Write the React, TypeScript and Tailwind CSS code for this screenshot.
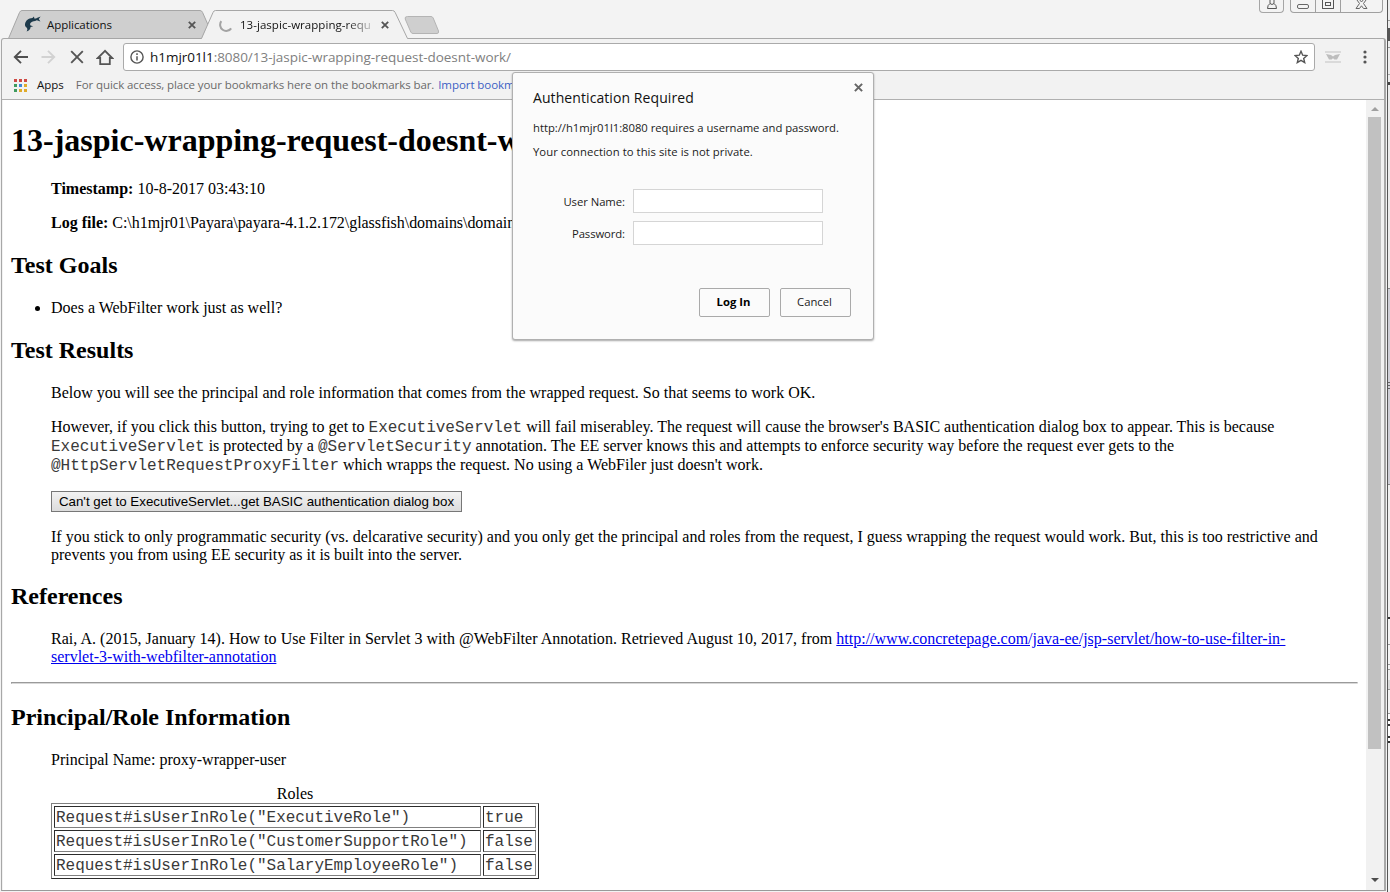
import type { ReactNode } from "react";

const UI = "font-['Open_Sans','Noto_Sans',sans-serif]";

function CloseX({ size, color, width }: { size: number; color: string; width: number }) {
  return (
    <svg width={size} height={size} viewBox="0 0 8 8" className="shrink-0">
      <path d="M0.8 0.8 L7.2 7.2 M7.2 0.8 L0.8 7.2" stroke={color} strokeWidth={width} fill="none" />
    </svg>
  );
}

function FishIcon() {
  return (
    <svg width="17" height="17" viewBox="0 0 17 17" className="shrink-0">
      <path
        d="M1 8.2 C1.6 4.6 4.6 2.2 8.4 2.1 L10 0.6 L10.3 2.4 C11.4 2.8 12.2 2.6 12.8 1.9 L16.6 0.6 L14.8 3 L16.4 5.4 L12.8 4.3 C10.6 5.6 8.4 5.2 7 6.4 C5.8 7.4 6 8.6 6.6 9.6 L9.2 10.2 L6.6 11 C6.4 13 5.2 14.6 2.6 15.6 C3.6 14 3.6 12.8 2.6 11.6 C1.4 10.6 0.8 9.6 1 8.2 Z"
        fill="#1d3a4b"
      />
    </svg>
  );
}

function TabStrip() {
  return (
    <div className="flex h-[28px] items-start pl-[8px]">
      <div className="relative flex h-[29px] w-[202px] shrink-0 items-center">
        <svg className="absolute inset-0" width="202" height="29" viewBox="0 0 202 29">
          <path d="M0.5 28.5 L11.5 2.5 Q12.4 0.5 14 0.5 H192 Q193.8 0.5 194.6 2.5 L201 17 L195 28.5 Z" fill="#cfcfcf" stroke="#a6a6a6" />
        </svg>
        <div className="relative flex w-full items-center pl-[16px]">
          <FishIcon />
          <span className="ml-[6px] w-[130px] text-[11.5px] leading-4 tracking-[-0.05px] text-[#111]">Applications</span>
          <span className="ml-[11px]"><CloseX size={8} color="#555" width={1.8} /></span>
        </div>
      </div>
      <div className="relative z-10 -ml-[9px] flex h-[29px] w-[208px] shrink-0 items-center">
        <svg className="absolute inset-0" width="208" height="29" viewBox="0 0 208 29">
          <path d="M0.5 29 L12 2.5 Q12.8 0.5 14.5 0.5 H191.5 Q193.3 0.5 194.2 2.5 L206.5 28.5 V29 Z" fill="#f2f2f2" />
          <path d="M0.5 28.5 L12 2.5 Q12.8 0.5 14.5 0.5 H191.5 Q193.3 0.5 194.2 2.5 L206.5 28.5" fill="none" stroke="#a6a6a6" />
        </svg>
        <div className="relative flex w-full items-center pl-[18px]">
          <svg width="14" height="14" viewBox="0 0 14 14" className="shrink-0">
            <path d="M2.3 3.2 A5.9 5.9 0 0 0 12.2 10.4" fill="none" stroke="#a3a3a3" strokeWidth="2" />
          </svg>
          <span className="ml-[7px] w-[132px] overflow-hidden bg-linear-to-r from-[#111] from-80% to-[#c8c8c8] bg-clip-text text-[11.5px] leading-4 tracking-[0.04px] whitespace-nowrap text-transparent">
            13-jaspic-wrapping-requ
          </span>
          <span className="ml-[9px]"><CloseX size={8} color="#555" width={1.8} /></span>
        </div>
      </div>
      <svg width="36" height="20" viewBox="0 0 36 20" className="-ml-[5px] mt-[6px] shrink-0">
        <path d="M3.5 0.5 H27 Q28.5 0.5 29.2 2 L34.5 15 Q35 17.5 33 17.5 H9 Q7.5 17.5 6.8 16 L1.2 3 Q0.5 0.5 3.5 0.5 Z" fill="#cfcfcf" stroke="#b4b4b4" />
      </svg>
    </div>
  );
}

function WindowControls() {
  return (
    <div className="absolute top-0 right-[4px] flex h-[13px] items-start gap-[6px]">
      <div className="flex h-[13px] w-[25px] justify-center rounded-b-[4px] border border-t-0 border-[#a5a5a5]">
        <svg width="12" height="10" viewBox="0 0 12 10">
          <path d="M4 0 V3.5 M8 0 V3.5 M4 3.5 Q1.5 5 1.5 8.5 H10.5 Q10.5 5 8 3.5 Q6 5.5 4 3.5" fill="none" stroke="#555" />
        </svg>
      </div>
      <div className="flex h-[13px] w-[93px] rounded-b-[4px] border border-t-0 border-[#a0a0a0]">
        <div className="flex w-[25px] justify-center border-r border-[#a0a0a0] pt-[4px]">
          <div className="h-[5px] w-[12px] rounded-[2px] border border-[#666]" />
        </div>
        <div className="flex w-[25px] justify-center border-r border-[#a0a0a0]">
          <div className="flex h-[9px] w-[12px] justify-center rounded-b-[1px] border border-t-0 border-[#555] pt-[2px]">
            <div className="h-[4px] w-[6px] border border-[#555]" />
          </div>
        </div>
        <div className="flex flex-1 justify-center">
          <svg width="13" height="10" viewBox="0 0 13 10">
            <path d="M2 0 L4.5 3.5 L1 8.5 H4.5 L6.5 5.8 L8.5 8.5 H12 L8.5 3.5 L11 0 M4.8 0 L6.5 2 L8.2 0" fill="none" stroke="#666" />
          </svg>
        </div>
      </div>
    </div>
  );
}

function Toolbar() {
  return (
    <div className="flex h-[36px] items-center pl-[11px]">
      <svg width="16" height="14" viewBox="0 0 16 14" className="shrink-0">
        <path d="M15 7 H2 M8 0.8 L1.8 7 L8 13.2" fill="none" stroke="#4f4f4f" strokeWidth="1.9" />
      </svg>
      <svg width="15" height="14" viewBox="0 0 15 14" className="ml-[12px] shrink-0">
        <path d="M0.5 7 H13 M7 0.8 L13.2 7 L7 13.2" fill="none" stroke="#d2d2d2" strokeWidth="1.9" />
      </svg>
      <svg width="14" height="14" viewBox="0 0 14 14" className="ml-[14px] shrink-0">
        <path d="M1.2 1.2 L12.8 12.8 M12.8 1.2 L1.2 12.8" stroke="#555" strokeWidth="1.9" />
      </svg>
      <svg width="18" height="17" viewBox="0 0 18 17" className="ml-[12px] shrink-0">
        <path d="M9 1.8 L1.8 9 H4.2 V15.2 H13.8 V9 H16.2 Z" fill="none" stroke="#555" strokeWidth="1.8" />
      </svg>
      <div className="ml-[9px] flex h-[28px] w-[1192px] shrink-0 items-center rounded-[3px] border border-[#aaa] bg-white pl-[6px]">
        <svg width="14" height="14" viewBox="0 0 14 14" className="shrink-0">
          <circle cx="7" cy="7" r="6.1" fill="none" stroke="#555" strokeWidth="1.4" />
          <path d="M7 6.2 V10.5 M7 3.3 V4.9" stroke="#555" strokeWidth="1.5" />
        </svg>
        <span className="ml-[6px] flex-1 text-[13.5px] leading-5 tracking-[-0.04px] text-[#808080]">
          <span className="text-[#111]">h1mjr01l1</span>:8080/13-jaspic-wrapping-request-doesnt-work/
        </span>
        <svg width="14" height="14" viewBox="0 0 14 14" className="mr-[6px] shrink-0">
          <path d="M7 1.3 L8.7 5.2 L12.9 5.6 L9.7 8.4 L10.7 12.6 L7 10.4 L3.3 12.6 L4.3 8.4 L1.1 5.6 L5.3 5.2 Z" fill="none" stroke="#555" strokeWidth="1.4" />
        </svg>
      </div>
      <svg width="16" height="12" viewBox="0 0 16 12" className="ml-[10px] shrink-0">
        <path d="M0 1 H16 M0 11 H16" stroke="#d2d2d2" strokeWidth="1.5" />
        <path d="M1 3 L6 4 L8 5.5 L10 4 L15 3 L12 8.5 H9.5 L8 7.2 L6.5 8.5 H4 Z" fill="#bdbdbd" />
      </svg>
      <svg width="4" height="14" viewBox="0 0 4 14" className="ml-[22px] shrink-0">
        <circle cx="2" cy="2" r="1.6" fill="#555" />
        <circle cx="2" cy="7" r="1.6" fill="#555" />
        <circle cx="2" cy="12" r="1.6" fill="#555" />
      </svg>
    </div>
  );
}

const APP_DOTS = [
  "bg-[#cf4a44]", "bg-[#cf4a44]", "bg-[#cf4a44]",
  "bg-[#3f9b5f]", "bg-[#3f86d8]", "bg-[#e0ab2a]",
  "bg-[#3f9b5f]", "bg-[#e0ab2a]", "bg-[#e0ab2a]",
];

function BookmarksBar() {
  return (
    <div className="flex h-[24px] items-center pb-[4px] pl-[12px] text-[11.5px] leading-4 whitespace-nowrap">
      <div className="grid grid-cols-3 gap-[2px]">
        {APP_DOTS.map((c, i) => (
          <span key={i} className={`h-[3px] w-[3px] ${c}`} />
        ))}
      </div>
      <span className="ml-[10px] text-[#111]">Apps</span>
      <span className="ml-[12px] tracking-[-0.09px] text-[#6a6a6a]">For quick access, place your bookmarks here on the bookmarks bar.</span>
      <span className="ml-[4px] tracking-[-0.07px] text-[#3c5fc4]">Import bookmarks now...</span>
    </div>
  );
}

function Code({ children }: { children: ReactNode }) {
  return <code className="font-['Liberation_Mono',monospace] text-[16px] leading-[0] text-[#3a3a3a]">{children}</code>;
}

function H2({ children, top = "mt-[20px]" }: { children: ReactNode; top?: string }) {
  return <h2 className={`mb-[20px] text-[24px] leading-[27px] font-bold ${top}`}>{children}</h2>;
}

const ROLES = [
  ['Request#isUserInRole("ExecutiveRole")', "true"],
  ['Request#isUserInRole("CustomerSupportRole")', "false"],
  ['Request#isUserInRole("SalaryEmployeeRole")', "false"],
];

const CELL =
  "h-[22px] border border-t-[#2c2c2c] border-l-[#2c2c2c] border-r-[#808080] border-b-[#808080] px-[1px] py-0 leading-[18px] tracking-[-0.03px] whitespace-nowrap";

function Page() {
  return (
    <main className="flow-root flex-1 overflow-hidden bg-white pr-[8px] pl-[8px] font-['Liberation_Serif',serif] text-[16px] leading-[18px] whitespace-nowrap text-black">
      <h1 className="mt-[22px] mb-[21px] text-[32px] leading-[37px] font-bold">13-jaspic-wrapping-request-doesnt-work</h1>
      <div className="mx-[40px] flex flex-col gap-[16px]">
        <p><b>Timestamp:</b> 10-8-2017 03:43:10</p>
        <p><b>Log file:</b> <span className="tracking-[-0.05px]">C:\h1mjr01\Payara\payara-4.1.2.172\glassfish\domains\domain1</span></p>
      </div>
      <H2>Test Goals</H2>
      <ul className="list-disc pl-[40px]">
        <li>Does a WebFilter work just as well?</li>
      </ul>
      <H2>Test Results</H2>
      <div className="mx-[40px]">
        <p>Below you will see the principal and role information that comes from the wrapped request. So that seems to work OK.</p>
        <p className="mt-[15px] leading-[19px]">
          However, if you click this button, trying to get to <Code>ExecutiveServlet</Code> will fail miserabley. The request will cause the browser's BASIC authentication dialog box to appear. This is because
          <br />
          <Code>ExecutiveServlet</Code> is protected by a <Code>@ServletSecurity</Code> annotation. The EE server knows this and attempts to enforce security way before the request ever gets to the
          <br />
          <Code>@HttpServletRequestProxyFilter</Code> which wrapps the request. No using a WebFiler just doesn't work.
        </p>
        <button className="mt-[17px] block h-[21px] w-[411px] border border-[#777] bg-linear-to-b from-[#f2f2f2] to-[#dcdcdc] font-['Liberation_Sans',sans-serif] text-[13.333px] leading-[18px]">
          Can't get to ExecutiveServlet...get BASIC authentication dialog box
        </button>
        <p className="mt-[16px]">
          If you stick to only programmatic security (vs. delcarative security) and you only get the principal and roles from the request, I guess wrapping the request would work. But, this is too restrictive and
          <br />
          prevents you from using EE security as it is built into the server.
        </p>
      </div>
      <H2 top="mt-[19px]">References</H2>
      <p className="mx-[40px]">
        <span className="tracking-[0.022px]">Rai, A. (2015, January 14). How to Use Filter in Servlet 3 with @WebFilter Annotation. Retrieved August 10, 2017, from </span>
        <a className="text-[#0000ee] underline">
          http://www.concretepage.com/java-ee/jsp-servlet/how-to-use-filter-in-
          <br />
          servlet-3-with-webfilter-annotation
        </a>
      </p>
      <hr className="mt-[16px] h-[2px] border border-t-[#9a9a9a] border-r-[#eee] border-b-[#d8d8d8] border-l-[#9a9a9a]" />
      <H2>Principal/Role Information</H2>
      <div className="mx-[40px]">
        <p>Principal Name: proxy-wrapper-user</p>
        <table className="mt-[16px] w-[488px] table-fixed border-separate border-spacing-[2px] border border-t-[#808080] border-r-[#2c2c2c] border-b-[#2c2c2c] border-l-[#808080]">
          <caption className="leading-[18px]">Roles</caption>
          <colgroup>
            <col className="w-[427px]" />
            <col className="w-[53px]" />
          </colgroup>
          <tbody>
            {ROLES.map(([call, value]) => (
              <tr key={call}>
                <td className={CELL}><Code>{call}</Code></td>
                <td className={CELL}><Code>{value}</Code></td>
              </tr>
            ))}
          </tbody>
        </table>
      </div>
    </main>
  );
}

function Scrollbar() {
  return (
    <div className="flex w-[18px] shrink-0 flex-col items-center bg-[#f1f1f1] pr-[1px]">
      <div className="flex h-[17px] items-center justify-center">
        <svg width="8" height="4" viewBox="0 0 8 4"><path d="M0 4 L4 0 L8 4 Z" fill="#a0a0a0" /></svg>
      </div>
      <div className="h-[632px] w-[13px] bg-[#c1c1c1]" />
      <div className="flex-1" />
      <div className="flex h-[20px] items-center justify-center">
        <svg width="8" height="4" viewBox="0 0 8 4"><path d="M0 0 H8 L4 4 Z" fill="#4d4d4d" /></svg>
      </div>
    </div>
  );
}

function Field({ label, spacing }: { label: string; spacing: string }) {
  return (
    <label className="flex h-[24px] items-center">
      <span className={`w-[92px] pt-[1px] text-right ${spacing}`}>{label}</span>
      <input className="ml-[8px] h-[24px] w-[190px] border border-[#d5d5d5] bg-white" />
    </label>
  );
}

function AuthDialog() {
  return (
    <div
      role="dialog"
      className={`absolute top-[72px] left-[512px] z-20 flex h-[268px] w-[362px] flex-col rounded-[3px] border border-[#b0b0b0] bg-[#fbfbfb] pr-[22px] pl-[20px] text-[11.3px] leading-4 text-[#1c1c1c] shadow-[0_1px_2px_rgba(0,0,0,0.35)] ${UI}`}
    >
      <span className="absolute top-[10px] right-[10px] flex"><CloseX size={9} color="#666" width={1.8} /></span>
      <h2 className="mt-[15px] text-[14px] leading-5 tracking-[0.08px] text-[#111]">Authentication Required</h2>
      <p className="mt-[12px] tracking-[-0.035px] whitespace-nowrap">http://h1mjr01l1:8080 requires a username and password.</p>
      <p className="mt-[8px] tracking-[0.045px] whitespace-nowrap">Your connection to this site is not private.</p>
      <div className="mt-[29px] flex flex-col gap-[8px]">
        <Field label="User Name:" spacing="tracking-[-0.05px]" />
        <Field label="Password:" spacing="tracking-[-0.1px]" />
      </div>
      <div className="mt-[43px] flex justify-end gap-[10px]">
        <button className="h-[29px] w-[71px] rounded-[2px] border border-[#aaa] bg-[#fbfbfb] pr-[2px] pb-[2px] font-bold text-black">Log In</button>
        <button className="h-[29px] w-[71px] rounded-[2px] border border-[#aaa] bg-[#fbfbfb] pr-[2px] pb-[2px]">Cancel</button>
      </div>
    </div>
  );
}

const EDGE: [number, string][] = [
  [20, "bg-[#ededed]"], [1, "bg-[#999]"], [7, "bg-[#ededed]"], [13, "bg-[#555]"], [6, "bg-[#ededed]"], [1, "bg-[#999]"],
  [26, "bg-[#ededed]"], [1, "bg-[#aaa]"], [7, "bg-[#ededed]"], [3, "bg-[#444]"], [203, "bg-[#ececec]"], [1, "bg-[#888]"],
  [93, "bg-[#d0d0d8]"], [1, "bg-[#666]"], [2, "bg-[#d0d0d8]"], [1, "bg-[#666]"], [2, "bg-[#d0d0d8]"], [1, "bg-[#666]"],
  [95, "bg-[#d0d0d8]"], [1, "bg-[#888]"], [132, "bg-[#efefef]"], [2, "bg-[#333]"], [25, "bg-[#f4f4f4]"], [1, "bg-[#999]"],
  [19, "bg-[#f4f4f4]"], [1, "bg-[#999]"], [4, "bg-[#f4f4f4]"], [1, "bg-[#999]"], [10, "bg-[#efefef]"], [9, "bg-[#dcdcdc]"],
  [1, "bg-[#999]"], [23, "bg-[#f4f4f4]"], [1, "bg-[#999]"], [5, "bg-[#fff]"], [2, "bg-[#333]"], [3, "bg-[#fff]"],
  [2, "bg-[#333]"], [10, "bg-[#fff]"], [2, "bg-[#333]"], [3, "bg-[#fff]"], [2, "bg-[#333]"],
];

function BackgroundWindowEdge() {
  return (
    <div className="flex w-[3px] flex-col border-l border-[#555] bg-[#f2f2f2]">
      {EDGE.map(([h, c], i) => (
        <div key={i} className={`shrink-0 ${c}`} style={{ height: h }} />
      ))}
    </div>
  );
}

export default function App() {
  return (
    <div className="flex h-[892px] w-[1390px] overflow-hidden bg-[#f3f3f3]">
      <div className={`relative flex w-[1387px] flex-col pt-[10px] ${UI}`}>
        <WindowControls />
        <TabStrip />
        <div className="mr-[1px] ml-[1px] flex h-[853px] flex-col rounded-t-[3px] border border-r-2 border-[#a8a8a8] border-b-[#9a9a9a] bg-[#f2f2f2]">
          <div className="flex h-[61px] shrink-0 flex-col border-b border-[#b0b0b0]">
            <Toolbar />
            <BookmarksBar />
          </div>
          <div className="flex min-h-0 flex-1 pl-[1px]">
            <Page />
            <Scrollbar />
          </div>
        </div>
        <AuthDialog />
      </div>
      <BackgroundWindowEdge />
    </div>
  );
}
